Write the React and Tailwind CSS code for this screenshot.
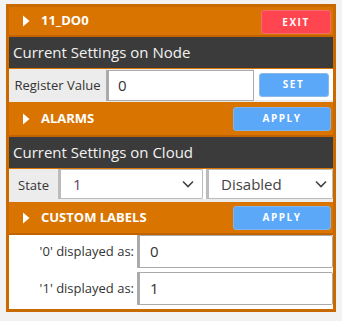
import React from 'react';

const font = { fontFamily: '"Open Sans", "Noto Sans", sans-serif' };

// small white caret used on the collapsible rows
function Caret() {
  return (
    <svg width="8" height="12" viewBox="0 0 8 12" className="mr-[11px] shrink-0">
      <path d="M1 0.5 L7.5 6 L1 11.5 Z" fill="#ffffff" />
    </svg>
  );
}

function Chevron() {
  return (
    <svg width="12" height="8" viewBox="0 0 12 8" className="shrink-0">
      <path d="M1 1.5 L6 6.5 L11 1.5" fill="none" stroke="#444" strokeWidth="1.6" />
    </svg>
  );
}

function Btn({ children, color, className = '' }) {
  return (
    <button
      className={`h-[24px] rounded-[3px] text-white text-[10px] font-bold tracking-[1.5px] ${color} ${className}`}
    >
      {children}
    </button>
  );
}

export default function App() {
  return (
    <div className="w-[342px] h-[321px] bg-[#f2f2f2] pt-1 pl-1.5 text-[#333]" style={font}>
      <div className="w-[330px] h-[308px] border-[3px] border-[#c96a00] bg-white flex flex-col">

        {/* ── node title ───────────────────────────── */}
        <div className="h-[30px] bg-[#d97400] border-b-2 border-[#c26300] flex items-center pl-[13px] pr-[2px]">
          <Caret />
          <span className="text-white text-[13px] font-bold flex-1">11_DO0</span>
          <Btn color="bg-[#ff4550] border border-[#f36a6f] w-[70px] mt-[2px]">EXIT</Btn>
        </div>

        {/* ── node settings ────────────────────────── */}
        <div className="h-[32px] bg-[#3b3b3b] border-b border-[#d97400] flex items-center pl-[4px]">
          <span className="text-[#f2f2f2] text-[15px]">Current Settings on Node</span>
        </div>
        <div className="h-[33px] bg-[#ececec] flex">
          <div className="w-[97px] flex items-center justify-center text-[13px]">Register Value</div>
          <div className="w-[148px] h-[31px] mt-[1px] bg-white border border-[#aaa] border-l-[3px] flex items-center pl-[9px] text-[15px]">0</div>
          <div className="flex-1 h-[31px] bg-white flex items-center justify-center">
            <Btn color="bg-[#5ba8f8] border border-[#8cb8e6] w-[70px]">SET</Btn>
          </div>
        </div>

        {/* ── alarms ───────────────────────────────── */}
        <div className="h-[35px] bg-[#d97400] border-b-2 border-[#c26300] flex items-center pl-[13px] pr-[2px]">
          <Caret />
          <span className="text-white text-[13px] font-bold flex-1">ALARMS</span>
          <Btn color="bg-[#5ba8f8] border border-[#7fb5ec] w-[98px]">APPLY</Btn>
        </div>

        {/* ── cloud settings ───────────────────────── */}
        <div className="h-[32px] bg-[#3b3b3b] border-b border-[#d97400] flex items-center pl-[4px]">
          <span className="text-[#f2f2f2] text-[15px]">Current Settings on Cloud</span>
        </div>
        <div className="h-[33px] bg-[#ececec] flex">
          <div className="w-[49px] flex items-center justify-center text-[13px]">State</div>
          <div className="w-[145px] h-[30px] bg-white border border-[#bbb] border-l-[3px] rounded-r-[2px] flex items-center justify-between pl-[12px] pr-[8px] text-[15px]">
            <span className="text-[#6b3f5a]">1</span>
            <Chevron />
          </div>
          <div className="w-[3px] h-[30px] bg-white" />
          <div className="flex-1 h-[30px] bg-white border border-[#bbb] border-l-[3px] rounded-r-[2px] flex items-center justify-between pl-[12px] pr-[5px] text-[15px]">
            <span className="text-[#444]">Disabled</span>
            <Chevron />
          </div>
        </div>

        {/* ── custom labels ────────────────────────── */}
        <div className="h-[33px] bg-[#d97400] border-b-2 border-[#c26300] flex items-center pl-[13px] pr-[2px]">
          <Caret />
          <span className="text-white text-[13px] font-bold flex-1">CUSTOM LABELS</span>
          <Btn color="bg-[#5ba8f8] border border-[#7fb5ec] w-[98px]">APPLY</Btn>
        </div>
        <div className="flex-1 bg-white flex flex-col gap-[4px]">
          {['0', '1'].map((v) => (
            <div key={v} className="flex items-center">
              <div className="w-[128px] text-right pr-[3px] text-[13px]">'{v}' displayed as:</div>
              <div className="flex-1 h-[33px] border border-[#aaa] border-l-[3px] rounded-r-[2px] flex items-center pl-[10px] text-[15px]">
                {v}
              </div>
            </div>
          ))}
        </div>
      </div>
    </div>
  );
}
